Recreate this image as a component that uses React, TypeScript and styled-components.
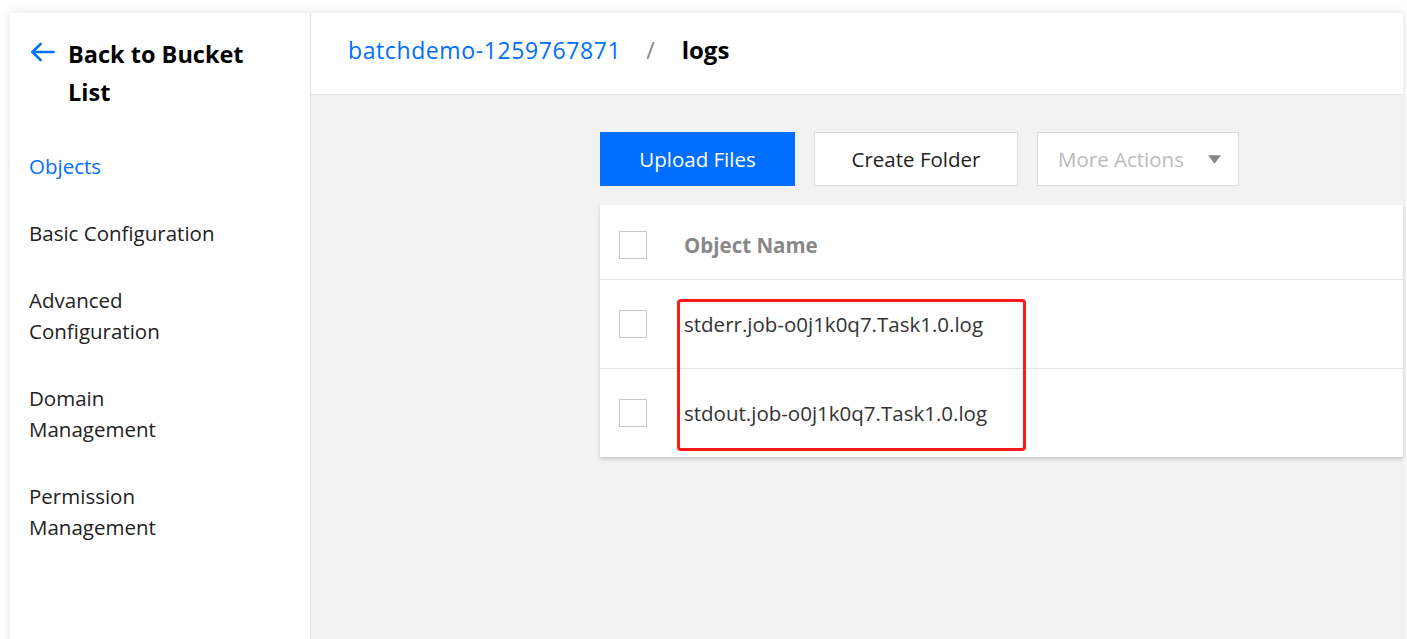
import styled, { createGlobalStyle } from 'styled-components';

const GlobalStyle = createGlobalStyle`
  html, body {
    margin: 0;
    padding: 0;
    background: #ffffff;
    font-family: "Open Sans", "Noto Sans", "Liberation Sans", sans-serif;
  }
`;

const Page = styled.div`
  width: 1407px;
  height: 639px;
  overflow: hidden;
  padding: 13px 4px 0 10px;
  box-sizing: border-box;
`;

const Frame = styled.div`
  display: flex;
  height: 640px;
  background: #f2f2f2;
  box-shadow: 0 0 10px rgba(0, 0, 0, 0.12);
`;

const Sidebar = styled.nav`
  width: 301px;
  flex-shrink: 0;
  background: #fff;
  border-right: 1px solid #e2e2e2;
  padding: 22px 0 0 19px;
  box-sizing: border-box;
`;

const Back = styled.div`
  display: flex;
  align-items: flex-start;
  gap: 11px;
  margin-bottom: 40px;

  svg {
    margin-top: 3px;
    flex-shrink: 0;
  }

  span {
    font-size: 23.5px;
    font-weight: 700;
    line-height: 38px;
    color: #000;
  }
`;

const NavItem = styled.div<{ active?: boolean }>`
  font-size: 20.5px;
  line-height: 31px;
  color: ${p => (p.active ? '#006eff' : '#222')};
  margin-bottom: 36px;
  width: 195px;
`;

const Main = styled.div`
  flex: 1;
  display: flex;
  flex-direction: column;
`;

const Header = styled.header`
  height: 82px;
  background: #fff;
  border-bottom: 1px solid #e2e2e2;
  display: flex;
  align-items: center;
  padding: 0 0 8px 37px;
  box-sizing: border-box;
  font-size: 23px;
`;

const Crumb = styled.span`
  color: #006eff;
  letter-spacing: 0.6px;
`;

const Sep = styled.span`
  color: #888;
  margin: 0 27px 0 25px;
`;

const Current = styled.span`
  font-weight: 700;
  color: #000;
  font-size: 24px;
`;

const Content = styled.div`
  padding: 37px 0 0 289px;
`;

const Toolbar = styled.div`
  display: flex;
  gap: 19px;
  margin-bottom: 19px;
`;

const Button = styled.button<{ primary?: boolean; disabled?: boolean; w: number }>`
  width: ${p => p.w}px;
  height: 54px;
  box-sizing: border-box;
  font-family: inherit;
  font-size: 20.5px;
  padding: 0 0 0 ${p => (p.disabled ? '20px' : '0')};
  border: ${p => (p.primary ? 'none' : '1px solid #dcdcdc')};
  background: ${p => (p.primary ? '#006eff' : '#fff')};
  color: ${p => (p.primary ? '#fff' : p.disabled ? '#bbb' : '#222')};
  display: flex;
  align-items: center;
  justify-content: ${p => (p.disabled ? 'flex-start' : 'center')};
  gap: 24px;
  cursor: pointer;
`;

const Table = styled.div`
  position: relative;
  background: #fff;
  box-shadow: 0 2px 4px rgba(0, 0, 0, 0.18);
`;

const Row = styled.div<{ head?: boolean }>`
  display: flex;
  align-items: center;
  height: ${p => (p.head ? '74px' : '89px')};
  padding: ${p => (p.head ? '6px' : '0')} 0 0 19px;
  border-top: ${p => (p.head ? 'none' : '1px solid #e5e5e5')};
  box-sizing: border-box;
`;

const Check = styled.span`
  width: 28px;
  height: 28px;
  border: 1px solid #c8c8c8;
  box-sizing: border-box;
  margin-right: 37px;
  flex-shrink: 0;
`;

const Cell = styled.span<{ head?: boolean }>`
  font-size: 20.5px;
  color: ${p => (p.head ? '#888' : '#333')};
  font-weight: ${p => (p.head ? 700 : 400)};
`;

const Highlight = styled.div`
  position: absolute;
  left: 77px;
  top: 94px;
  width: 349px;
  height: 152px;
  border: 3px solid #ff1a1a;
  border-radius: 4px;
  box-sizing: border-box;
  pointer-events: none;
`;

const files = ['stderr.job-o0j1k0q7.Task1.0.log', 'stdout.job-o0j1k0q7.Task1.0.log'];

const App = () => {
  return (
    <>
      <GlobalStyle />
      <Page>
        <Frame>
          <Sidebar>
            <Back>
              <svg width="28" height="28" viewBox="0 0 24 24" fill="none" stroke="#006eff" strokeWidth="2.2" strokeLinecap="round" strokeLinejoin="round">
                <path d="M21 12H3" />
                <path d="M10 5l-7 7 7 7" />
              </svg>
              <span>
                Back to Bucket
                <br />
                List
              </span>
            </Back>
            <NavItem active>Objects</NavItem>
            <NavItem>Basic Configuration</NavItem>
            <NavItem>Advanced Configuration</NavItem>
            <NavItem>Domain Management</NavItem>
            <NavItem>Permission Management</NavItem>
          </Sidebar>
          <Main>
            <Header>
              <Crumb>batchdemo-1259767871</Crumb>
              <Sep>/</Sep>
              <Current>logs</Current>
            </Header>
            <Content>
              <Toolbar>
                <Button primary w={195}>Upload Files</Button>
                <Button w={204}>Create Folder</Button>
                <Button disabled w={202}>
                  More Actions
                  <svg width="13" height="9" viewBox="0 0 12 8">
                    <path d="M0 0h12L6 8z" fill="#888" />
                  </svg>
                </Button>
              </Toolbar>
              <Table>
                <Row head>
                  <Check />
                  <Cell head>Object Name</Cell>
                </Row>
                {files.map(f => (
                  <Row key={f}>
                    <Check />
                    <Cell>{f}</Cell>
                  </Row>
                ))}
                <Highlight />
              </Table>
            </Content>
          </Main>
        </Frame>
      </Page>
    </>
  );
};

export default App;
